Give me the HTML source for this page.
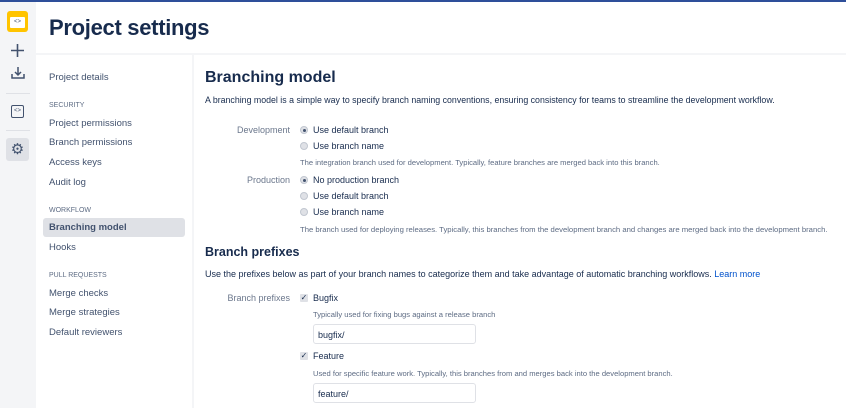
<!DOCTYPE html>
<html><head><meta charset="utf-8"><style>
*{margin:0;padding:0;box-sizing:border-box}
body{width:846px;height:408px;overflow:hidden;background:#fff;font-family:"Liberation Sans",sans-serif;color:#172b4d;position:relative}
.a{position:absolute;white-space:nowrap}
.nav{font-size:9.5px;color:#42526e}
.sec{font-size:7px;color:#5e6c84}
.t{font-size:9px;color:#172b4d}
.h{font-size:7.6px;color:#5e6c84}
.l{font-size:9px;color:#6b778c;text-align:right;width:90px}
.r{position:absolute;width:8px;height:8px;border-radius:50%;background:#dfe1e6;border:1px solid #c1c7d0}
.r.on::after{content:"";position:absolute;left:1.5px;top:1.5px;width:3px;height:3px;border-radius:50%;background:#42526e}
.c{position:absolute;width:8px;height:8px;border-radius:1px;background:#dfe1e6;font-size:8px;line-height:8px;text-align:center;color:#172b4d}
.in{position:absolute;width:163px;height:20px;border:1px solid #dfe1e6;border-radius:3px;font-size:9px;padding:5px 4px;color:#172b4d}
</style></head><body>
<div class="a" style="left:0;top:0;width:846px;height:2px;background:#2e4f9a"></div>
<div class="a" style="left:0;top:2px;width:36px;height:406px;background:#f4f5f7"></div>
<div class="a" style="left:7px;top:11px;width:21px;height:21px;background:#ffc400;border-radius:3px"></div>
<div class="a" style="left:10px;top:17px;width:15px;height:11px;background:#fff;border-radius:1px;font-size:6px;text-align:center;line-height:11px;color:#42526e">&lt;&gt;</div>
<svg class="a" style="left:10px;top:43px" width="15" height="15" viewBox="0 0 15 15"><path d="M7.5 1v13M1 7.5h13" stroke="#42526e" stroke-width="1.6"/></svg>
<svg class="a" style="left:10px;top:66px" width="16" height="14" viewBox="0 0 16 14"><path d="M8 1v8M5 6l3 3 3-3M2 8v4h12V8" fill="none" stroke="#42526e" stroke-width="1.5"/></svg>
<div class="a" style="left:6px;top:93px;width:24px;height:1px;background:#dfe1e6"></div>
<div class="a" style="left:11px;top:105px;width:13px;height:13px;border:1.5px solid #42526e;border-radius:2px;font-size:6px;text-align:center;line-height:10px;color:#42526e">&lt;&gt;</div>
<div class="a" style="left:6px;top:130px;width:24px;height:1px;background:#dfe1e6"></div>
<div class="a" style="left:6px;top:138px;width:23px;height:23px;background:#dfe1e6;border-radius:3px;font-size:15px;text-align:center;line-height:23px;color:#42526e">⚙</div>
<div class="a" style="left:49px;top:15px;font-size:22px;color:#172b4d;font-weight:bold;letter-spacing:-0.3px">Project settings</div>
<div class="a" style="left:36px;top:53px;width:810px;height:2px;background:#f4f5f7"></div>
<div class="a" style="left:192px;top:55px;width:2px;height:353px;background:#f4f5f7"></div>
<div class="a nav" style="left:49px;top:72px">Project details</div>
<div class="a sec" style="left:49px;top:102px">SECURITY</div>
<div class="a nav" style="left:49px;top:118px">Project permissions</div>
<div class="a nav" style="left:49px;top:137px">Branch permissions</div>
<div class="a nav" style="left:49px;top:157px">Access keys</div>
<div class="a nav" style="left:49px;top:177px">Audit log</div>
<div class="a sec" style="left:49px;top:207px">WORKFLOW</div>
<div class="a" style="left:43px;top:218px;width:142px;height:19px;background:#dfe1e6;border-radius:3px"></div>
<div class="a nav" style="left:49px;top:222px;font-weight:bold">Branching model</div>
<div class="a nav" style="left:49px;top:242px">Hooks</div>
<div class="a sec" style="left:49px;top:272px">PULL REQUESTS</div>
<div class="a nav" style="left:49px;top:288px">Merge checks</div>
<div class="a nav" style="left:49px;top:307px">Merge strategies</div>
<div class="a nav" style="left:49px;top:327px">Default reviewers</div>

<div class="a" style="left:205px;top:69px;font-size:16px;font-weight:bold">Branching model</div>
<div class="a t" style="left:205px;top:95px;font-size:8.8px">A branching model is a simple way to specify branch naming conventions, ensuring consistency for teams to streamline the development workflow.</div>
<div class="a l" style="left:200px;top:125px">Development</div>
<div class="r on" style="left:300px;top:126px"></div><div class="a t" style="left:313px;top:125px">Use default branch</div>
<div class="r" style="left:300px;top:142px"></div><div class="a t" style="left:313px;top:141px">Use branch name</div>
<div class="a h" style="left:300px;top:158px">The integration branch used for development. Typically, feature branches are merged back into this branch.</div>
<div class="a l" style="left:200px;top:175px">Production</div>
<div class="r on" style="left:300px;top:176px"></div><div class="a t" style="left:313px;top:175px">No production branch</div>
<div class="r" style="left:300px;top:192px"></div><div class="a t" style="left:313px;top:191px">Use default branch</div>
<div class="r" style="left:300px;top:208px"></div><div class="a t" style="left:313px;top:207px">Use branch name</div>
<div class="a h" style="left:300px;top:225px;font-size:7.7px">The branch used for deploying releases. Typically, this branches from the development branch and changes are merged back into the development branch.</div>
<div class="a" style="left:205px;top:245px;font-size:12.5px;font-weight:bold">Branch prefixes</div>
<div class="a t" style="left:205px;top:269px">Use the prefixes below as part of your branch names to categorize them and take advantage of automatic branching workflows. <span style="color:#0052cc">Learn more</span></div>
<div class="a l" style="left:200px;top:293px">Branch prefixes</div>
<div class="c" style="left:300px;top:294px">✓</div><div class="a t" style="left:313px;top:293px">Bugfix</div>
<div class="a h" style="left:313px;top:310px">Typically used for fixing bugs against a release branch</div>
<div class="in" style="left:313px;top:324px">bugfix/</div>
<div class="c" style="left:300px;top:352px">✓</div><div class="a t" style="left:313px;top:351px">Feature</div>
<div class="a h" style="left:313px;top:369px">Used for specific feature work. Typically, this branches from and merges back into the development branch.</div>
<div class="in" style="left:313px;top:383px">feature/</div>
</body></html>
